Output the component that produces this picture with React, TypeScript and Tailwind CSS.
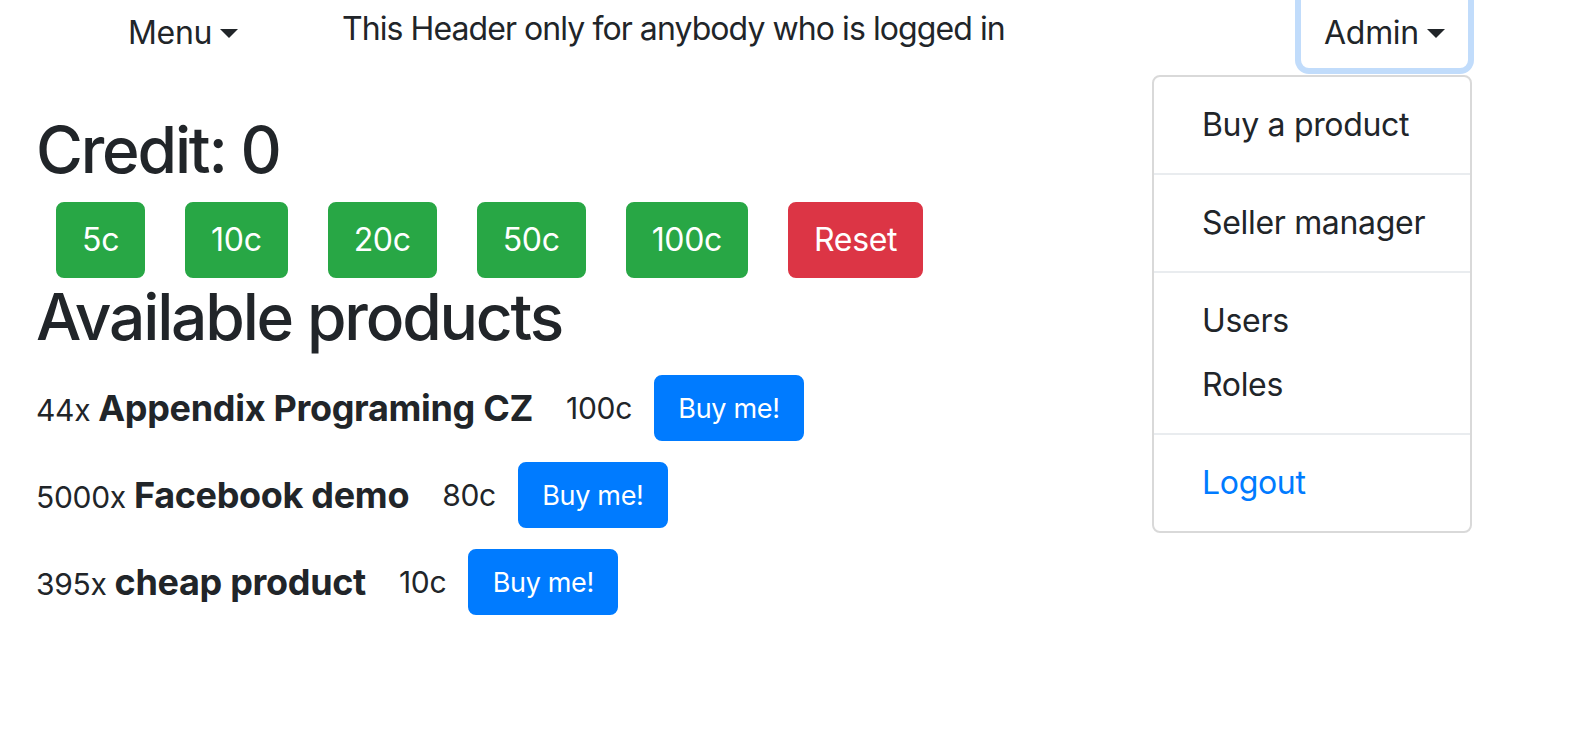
import React from "react";

const coins = ["5c", "10c", "20c", "50c", "100c"];

const products = [
  { count: 44, name: "Appendix Programing CZ", price: 100 },
  { count: 5000, name: "Facebook demo", price: 80 },
  { count: 395, name: "cheap product", price: 10 },
];

function Caret() {
  return (
    <span className="ml-[8px] inline-block h-0 w-0 border-x-[9px] border-t-[9px] border-x-transparent border-t-[#212529] align-[6px]" />
  );
}

export default function App() {
  return (
    <div className="relative min-h-[734px] bg-white font-['Inter',sans-serif] tracking-[-0.02em] text-[#212529]">
      {/* header, top of it is cut off */}
      <header className="flex h-[68px] items-end">
        <div className="ml-[102px] w-[240px]">
          <button className="h-[76px] rounded-[8px] border-2 border-transparent px-[24px] pt-[6px] text-[32px] leading-[48px]">
            Menu
            <Caret />
          </button>
        </div>
        <div className="self-start whitespace-nowrap pt-[5px] text-[32px] leading-[48px] tracking-[-0.029em]">
          This Header only for anybody who is logged in
        </div>
        <div className="relative ml-auto mr-[110px]">
          <button className="h-[76px] w-[167px] rounded-[8px] border-2 border-white bg-white pt-[6px] text-[32px] leading-[48px] shadow-[0_0_0_6px_#c1dcfb]">
            Admin
            <Caret />
          </button>
          <div className="absolute right-[-4px] top-full z-10 mt-[7px] w-[320px] whitespace-nowrap rounded-[8px] border-2 border-[#d9d9d9] bg-white py-[16px] text-[32px] leading-[48px]">
            <div className="px-[48px] py-[8px]">Buy a product</div>
            <div className="my-[16px] border-t-2 border-[#e9ecef]" />
            <div className="px-[48px] py-[8px]">Seller manager</div>
            <div className="my-[16px] border-t-2 border-[#e9ecef]" />
            <div className="px-[48px] py-[8px]">Users</div>
            <div className="px-[48px] py-[8px]">Roles</div>
            <div className="my-[16px] border-t-2 border-[#e9ecef]" />
            <div className="px-[48px] py-[8px] text-[#007bff]">Logout</div>
          </div>
        </div>
      </header>

      <main className="mt-[43px] pl-[36px]">
        <h2 className="mb-[14px] text-[64px] font-medium leading-[77px] tracking-[-0.034em]">Credit: 0</h2>
        <div className="flex gap-[40px] pl-[20px]">
          {coins.map((c) => (
            <button
              key={c}
              className="h-[76px] rounded-[8px] border-2 border-[#28a745] bg-[#28a745] px-[24px] text-[32px] leading-[48px] text-white"
            >
              {c}
            </button>
          ))}
          <button className="h-[76px] rounded-[8px] border-2 border-[#dc3545] bg-[#dc3545] px-[24px] text-[32px] leading-[48px] text-white">
            Reset
          </button>
        </div>
        <h2 className="mb-[20px] text-[64px] font-medium leading-[77px] tracking-[-0.034em]">Available products</h2>

        <div className="flex flex-col gap-[21px]">
          {products.map((p) => (
            <div key={p.name} className="flex items-center text-[30px]">
              <span className="whitespace-nowrap">
                {p.count}x <b className="text-[36px] font-bold">{p.name}</b>
              </span>
              <span className="ml-[33px] mr-[22px]">{p.price}c</span>
              <button className="h-[66px] w-[150px] rounded-[8px] border-2 border-[#007bff] bg-[#007bff] text-[27px] leading-[45px] text-white">
                Buy me!
              </button>
            </div>
          ))}
        </div>
      </main>
    </div>
  );
}
